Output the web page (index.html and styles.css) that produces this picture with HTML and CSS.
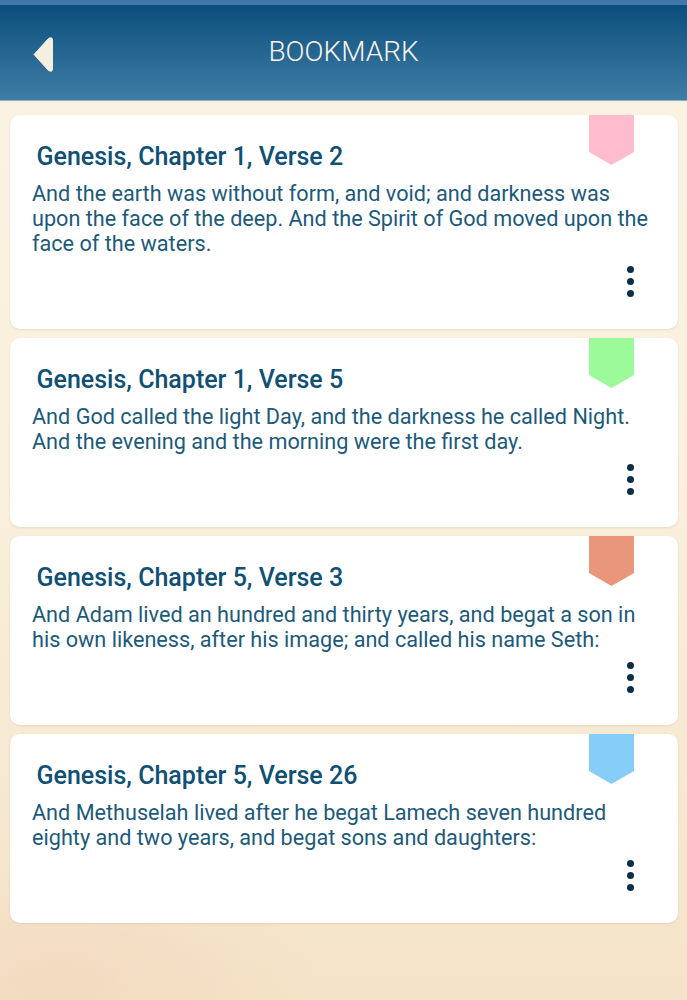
FILE: index.html
```html
<!DOCTYPE html>
<html lang="en">
<head>
<meta charset="utf-8">
<title>Bookmark</title>
<link rel="stylesheet" href="styles.css">
</head>
<body>
<div class="page">
  <div class="status-strip"></div>
  <header class="app-bar">
    <svg class="back" viewBox="0 0 20 35" width="20" height="35" aria-hidden="true"><path d="M1 17.500 L15.500 1.500 Q19.500 -0.500 19.500 3 L19.500 32 Q19.500 35.500 15.500 33.500 Z" fill="#f5efe2" stroke="#f5efe2" stroke-width="1" stroke-linejoin="round"/></svg>
    <h1 class="app-title">BOOKMARK</h1>
  </header>
  <main class="list">
    <article class="card card-tall">
      <svg class="flag" viewBox="0 0 45 50" width="45" height="50" aria-hidden="true"><path d="M0 0H45V37L22.500 50L0 37Z" fill="#ffbccd"/></svg>
      <h2 class="card-title">Genesis, Chapter 1, Verse 2</h2>
      <p class="card-text">And the earth was without form, and void; and darkness was upon the face of the deep. And the Spirit of God moved upon the face of the waters.</p>
      <div class="dots"><i></i><i></i><i></i></div>
    </article>
    <article class="card">
      <svg class="flag" viewBox="0 0 45 50" width="45" height="50" aria-hidden="true"><path d="M0 0H45V37L22.500 50L0 37Z" fill="#9cfb98"/></svg>
      <h2 class="card-title">Genesis, Chapter 1, Verse 5</h2>
      <p class="card-text">And God called the light Day, and the darkness he called Night. And the evening and the morning were the first day.</p>
      <div class="dots"><i></i><i></i><i></i></div>
    </article>
    <article class="card">
      <svg class="flag" viewBox="0 0 45 50" width="45" height="50" aria-hidden="true"><path d="M0 0H45V37L22.500 50L0 37Z" fill="#e9967a"/></svg>
      <h2 class="card-title">Genesis, Chapter 5, Verse 3</h2>
      <p class="card-text">And Adam lived an hundred and thirty years, and begat a son in his own likeness, after his image; and called his name Seth:</p>
      <div class="dots"><i></i><i></i><i></i></div>
    </article>
    <article class="card">
      <svg class="flag" viewBox="0 0 45 50" width="45" height="50" aria-hidden="true"><path d="M0 0H45V37L22.500 50L0 37Z" fill="#87cdf9"/></svg>
      <h2 class="card-title">Genesis, Chapter 5, Verse 26</h2>
      <p class="card-text">And Methuselah lived after he begat Lamech seven hundred eighty and two years, and begat sons and daughters:</p>
      <div class="dots"><i></i><i></i><i></i></div>
    </article>
  </main>
</div>
</body>
</html>
```
FILE: styles.css
```css
* { box-sizing: border-box; }
html, body { margin: 0; padding: 0; }
body { font-family: Roboto, "Liberation Sans", sans-serif; }
.page {
  width: 687px;
  height: 1000px;
  overflow: hidden;
  display: flex;
  flex-direction: column;
  background:
    radial-gradient(ellipse 260px 120px at 60px 980px, rgba(242, 214, 190, 0.7), rgba(242, 214, 190, 0)),
    linear-gradient(180deg, #fbf3e3 0%, #f9efdc 50%, #f4e3c8 100%);
}
.status-strip { height: 5px; background: #3f79ab; }
.app-bar {
  height: 96px;
  position: relative;
  display: flex;
  align-items: center;
  justify-content: center;
  background: linear-gradient(180deg, #0c4f7c 0%, #3f7da6 100%);
  border-bottom: 1px solid #8fb0c4;
}
.back { position: absolute; left: 33px; top: 32px; }
.app-title {
  margin: 0 0 1px;
  font-size: 28px;
  font-weight: 300;
  color: #f8f4ec;
  line-height: 32px;
}
.list {
  display: flex;
  flex-direction: column;
  gap: 9px;
  padding: 14px 9px 0 10px;
}
.card {
  position: relative;
  height: 189px;
  padding: 27px 22px 0 22px;
  background: #fff;
  border-radius: 10px;
  box-shadow: 0 1px 2px rgba(190, 160, 120, 0.25);
}
.card-tall { height: 214px; }
.flag { position: absolute; top: 0; left: 578.5px; display: block; }
.card-title {
  margin: 0 0 0 4.500px;
  font-size: 25px;
  line-height: 29px;
  font-weight: 500;
  color: #0f5075;
}
.card-text {
  margin: 10px 0 0;
  font-size: 21.65px;
  line-height: 25px;
  font-weight: 400;
  color: #1c5a7b;
}
.dots {
  position: absolute;
  right: 44px;
  bottom: 32px;
  display: flex;
  flex-direction: column;
  gap: 5px;
}
.dots i {
  display: block;
  width: 7px;
  height: 7px;
  border-radius: 50%;
  background: #0b2f4a;
}
```
